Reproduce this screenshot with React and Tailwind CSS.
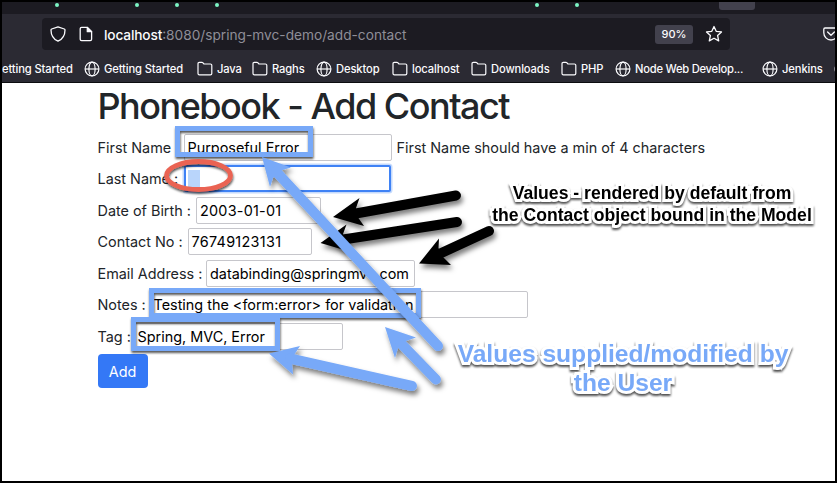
const Globe = () => (
  <svg className="size-4 shrink-0" viewBox="0 0 16 16" fill="none" stroke="#fbfbfe" strokeWidth="1.2">
    <circle cx="8" cy="8" r="6.9" />
    <ellipse cx="8" cy="8" rx="3.1" ry="6.9" />
    <path d="M1.1 8h13.8" />
  </svg>
);

const Folder = () => (
  <svg className="size-4 shrink-0" viewBox="0 0 16 16" fill="none" stroke="#fbfbfe" strokeWidth="1.2" strokeLinejoin="round">
    <path d="M1 12.4V2.7a1.3 1.3 0 0 1 1.3-1.3h2.6a1.5 1.5 0 0 1 1.1.5l1 1.1h6.4a1.4 1.4 0 0 1 1.4 1.4v8a1.4 1.4 0 0 1-1.4 1.4H2.4A1.4 1.4 0 0 1 1 12.4z" />
  </svg>
);

const bookmarks = [
  { icon: Globe, label: "Getting Started", width: "w-[113px]" },
  { icon: Folder, label: "Java", width: "w-[55px]" },
  { icon: Folder, label: "Raghs", width: "w-[64px]" },
  { icon: Globe, label: "Desktop", width: "w-[76px]" },
  { icon: Folder, label: "localhost", width: "w-[79px]" },
  { icon: Folder, label: "Downloads", width: "w-[90px]" },
  { icon: Folder, label: "PHP", width: "w-[54px]" },
  { icon: Globe, label: "Node Web Develop...", width: "w-[147px]", tracking: "tracking-[-0.24px]" },
  { icon: Globe, label: "Jenkins", width: "w-[72px]" },
];

const fields = [
  { label: "First Name :", labelWidth: "w-[86px]", value: "Purposeful Error", width: "w-[208px]", error: "First Name should have a min of 4 characters" },
  { label: "Last Name :", labelWidth: "w-[86px]", value: "", width: "w-[207px]", focused: true },
  { label: "Date of Birth :", labelWidth: "w-[98.5px]", value: "2003-01-01", width: "w-[125px]", tracking: "tracking-[0.25px]" },
  { label: "Contact No :", labelWidth: "w-[90px]", value: "76749123131", width: "w-[124px]", tracking: "tracking-[0.3px]" },
  { label: "Email Address :", labelWidth: "w-[108.5px]", value: "databinding@springmvc.com", width: "w-[209px]" },
  { label: "Notes :", labelWidth: "w-[52px]", value: "Testing the <form:error> for validation", width: "w-[378px]" },
  { label: "Tag :", labelWidth: "w-[36px]", value: "Spring, MVC, Error", width: "w-[209px]" },
];

function Field({ label, labelWidth, value, width, error, focused, tracking = "" }) {
  const look = focused
    ? "border-2 border-[#3f82f5] shadow-[0_0_0_1.5px_#c5dafc]"
    : "border border-[#c6c6cb]";
  return (
    <div className="flex h-[31.5px] items-center whitespace-nowrap">
      <span className={`${labelWidth} shrink-0`}>{label}</span>
      <div className={`${width} ${look} ${tracking} flex h-[27px] shrink-0 items-center rounded-[2px] bg-white pl-[3px] text-black`}>
        {focused ? <span className="-ml-px h-[17px] w-3 bg-[#b9d5fb]" /> : value}
      </div>
      {error && <span className="ml-[5px]">{error}</span>}
    </div>
  );
}

function Chrome() {
  return (
    <header className="flex h-[81px] shrink-0 flex-col border-b border-[#0c0c0f] bg-[#2b2a33] text-[#fbfbfe]">
      <div className="relative h-3 shrink-0 bg-[#1c1b22]">
        <i className="absolute left-[53px] top-[1px] size-1 rounded-full bg-[#7df5c4]" />
        <i className="absolute left-[133px] top-[1px] size-1 rounded-full bg-[#7df5c4]" />
        <i className="absolute left-[173px] top-[1px] size-1 rounded-full bg-[#7df5c4]" />
        <i className="absolute left-[213px] top-[1px] size-1 rounded-full bg-[#7df5c4]" />
        <i className="absolute left-[533px] top-[1px] size-1 rounded-full bg-[#7df5c4]" />
        <i className="absolute left-[573px] top-[1px] size-1 rounded-full bg-[#7df5c4]" />
        <i className="absolute left-[717px] top-0 h-2 w-9 rounded-b-[3px] bg-[#42414d]" />
      </div>
      <div className="mt-1 flex h-8 shrink-0 items-center pl-10">
        <div className="flex h-8 w-[688px] shrink-0 items-center rounded bg-[#1c1b22] pl-2">
          <svg className="size-4" viewBox="0 0 16 16" fill="none" stroke="#fbfbfe" strokeWidth="1.3" strokeLinejoin="round">
            <path d="M8 .9 14.3 3c.5.2.7.5.7.9 0 5.2-2.1 9-7 11.3C3.1 12.900 1 9.1 1 3.9c0-.4.2-.7.7-.9z" />
          </svg>
          <svg className="ml-3 size-4" viewBox="0 0 16 16" fill="none" stroke="#fbfbfe" strokeWidth="1.3" strokeLinejoin="round">
            <path d="M3.6 1.4h5.7l4.3 4.3v7.5a1.4 1.4 0 0 1-1.4 1.4H3.6a1.4 1.4 0 0 1-1.4-1.4V2.8a1.4 1.4 0 0 1 1.4-1.4z" />
            <path d="M9.3 1.4v4.3h4.3z" fill="#fbfbfe" />
          </svg>
          <p className="ml-[10px] mt-px whitespace-nowrap text-[13.7px] leading-5 text-[#8f8e98]">
            <span className="font-medium tracking-[-0.15px] text-[#fbfbfe]">localhost</span>
            :8080/spring-mvc-demo/add-contact
          </p>
          <span className="ml-auto mr-3 flex h-[19px] w-[38px] items-center justify-center rounded-[3px] bg-[#42414d] text-[11px] font-medium">90%</span>
          <svg className="mr-[7px] size-[18px]" viewBox="0 0 18 18" fill="none" stroke="#fbfbfe" strokeWidth="1.3" strokeLinejoin="round">
            <path d="M9 1.5 11.2 6.3 16.5 6.9 12.6 10.5 13.7 15.9 9 13.2 4.3 15.9 5.4 10.5 1.5 6.900 6.8 6.3z" />
          </svg>
        </div>
        <svg className="ml-[93px] size-4 shrink-0" viewBox="0 0 16 16" fill="none" stroke="#fbfbfe" strokeWidth="1.3" strokeLinecap="round" strokeLinejoin="round">
          <path d="M2 2h12a1.2 1.2 0 0 1 1.2 1.2v3.6a7.2 7.2 0 0 1-14.4 0V3.200A1.200 1.200 0 0 1 2 2zM4.6 6 8 9.3 11.4 6" />
        </svg>
      </div>
      <nav className="flex h-8 shrink-0 items-center overflow-hidden pt-[6px] text-[11.2px] font-medium tracking-[-0.12px]">
        <span className="w-[82px] shrink-0 whitespace-nowrap">etting Started</span>
        {bookmarks.map(({ icon: Icon, label, width, tracking = "" }) => (
          <span key={label} className={`${width} ${tracking} flex shrink-0 items-center gap-[4px] whitespace-nowrap`}>
            <Icon />
            {label}
          </span>
        ))}
        <Globe />
      </nav>
    </header>
  );
}

const blueArrows = [
  { head: "262,157 291,167.5 281,170.5 273,178 270,187", line: "M276 171.5 438 346" },
  { head: "385,327 416,337.5 406,341 398,348 395,358", line: "M400 342.5 436 379.5" },
  { head: "269,353.5 300,346 294,355 292,363 293,374.5", line: "M290 358.5 412 386" },
];

const blackArrows = [
  { head: "333,217 359.5,198 356,208 357,216 364,226", line: "M353 214 456 195.5" },
  { head: "320.5,243 346.5,224.5 343,234 344,242 351,252", line: "M340 240 457 222" },
  { head: "419,263.5 439,238.5 438.5,248 442,256 451,265", line: "M437 255 489 231" },
];

function Arrows({ items, color, width }) {
  return items.map(({ head, line }) => (
    <g key={line} fill={color} filter="url(#arrow-shadow)">
      <polygon points={head} />
      <path d={line} fill="none" stroke={color} strokeWidth={width} strokeLinecap="round" />
    </g>
  ));
}

function Annotations() {
  return (
    <>
      <svg className="pointer-events-none absolute left-0 top-0 h-[483px] w-[837px]" viewBox="0 0 837 483">
        <defs>
          <filter id="arrow-shadow" x="-20%" y="-20%" width="150%" height="170%">
            <feDropShadow dx="2" dy="4" stdDeviation="2.5" floodColor="#000" floodOpacity="0.5" />
          </filter>
          <filter id="box-shadow" x="-10%" y="-20%" width="120%" height="150%">
            <feDropShadow dx="0.5" dy="2" stdDeviation="0.8" floodColor="#000" floodOpacity="0.65" />
          </filter>
        </defs>
        <Arrows items={blackArrows} color="#000" width={10} />
        <g fill="none" stroke="#78a9f8" strokeWidth="5">
          <rect x="177.5" y="128.5" width="133" height="26" filter="url(#box-shadow)" />
          <rect x="151.5" y="290.5" width="267" height="25" filter="url(#box-shadow)" />
          <rect x="133.5" y="319.5" width="144" height="29" filter="url(#box-shadow)" />
        </g>
        <ellipse cx="198.5" cy="175.5" rx="32" ry="14" fill="none" stroke="#ea6352" strokeWidth="4.8" filter="url(#box-shadow)" />
        <Arrows items={blueArrows} color="#78a9f8" width={10} />
      </svg>
      <p className="absolute left-[452px] top-[182px] w-[400px] whitespace-nowrap text-center font-['Liberation_Sans',sans-serif] text-[17.6px] font-bold leading-[22px] text-black [-webkit-text-stroke:6px_white] [filter:drop-shadow(0_2px_1px_rgba(0,0,0,0.7))] [paint-order:stroke_fill] [stroke-linejoin:round]">
        Values - rendered by default from
        <br />
        the Contact object bound in the Model
      </p>
      <p className="absolute left-[423px] top-[339px] w-[400px] whitespace-nowrap text-center font-['Liberation_Sans',sans-serif] text-[24.6px] font-bold leading-[29px] text-[#78a9f8] [-webkit-text-stroke:6px_white] [filter:drop-shadow(0_2px_1px_rgba(0,0,0,0.7))] [paint-order:stroke_fill] [stroke-linejoin:round]">
        Values supplied/modified by
        <br />
        the User
      </p>
    </>
  );
}

export default function App() {
  return (
    <div className="relative flex h-[483px] w-[837px] flex-col overflow-hidden border-2 border-black bg-white font-['Inter',sans-serif]">
      <Chrome />
      <main className="flex flex-1 flex-col items-start pl-[95.5px] text-[14.4px] leading-[21px] text-[#212529]">
        <h1 className="mt-[2px] h-[46.5px] whitespace-nowrap text-[36px] font-medium leading-[43px] tracking-[-1.5px]">Phonebook - Add Contact</h1>
        {fields.map((f) => (
          <Field key={f.label} {...f} />
        ))}
        <button className="mt-[2px] h-[34px] w-[50px] rounded bg-[#3478f6] text-white">Add</button>
      </main>
      <div className="absolute -left-0.5 -top-0.5">
        <Annotations />
      </div>
    </div>
  );
}
